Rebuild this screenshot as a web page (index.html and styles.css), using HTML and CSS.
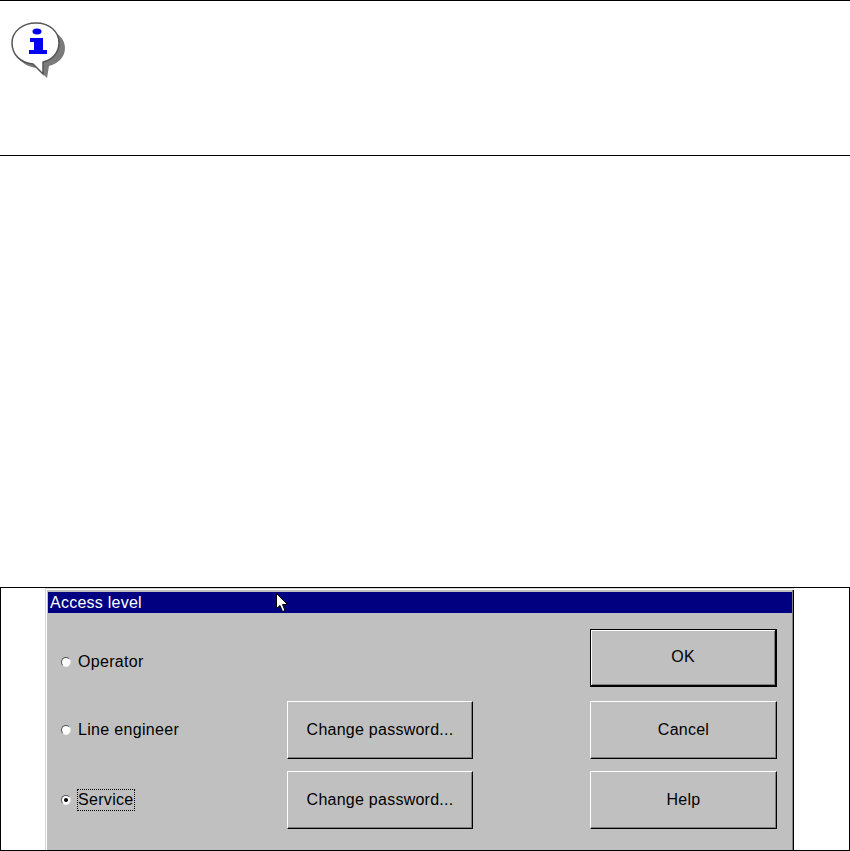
FILE: index.html
```html
<!DOCTYPE html>
<html lang="en">
<head>
<meta charset="utf-8">
<title>Access level</title>
<link rel="stylesheet" href="styles.css">
</head>
<body>
<section class="note">
  <svg class="note-icon" width="66" height="66" viewBox="0 0 66 66" xmlns="http://www.w3.org/2000/svg">
    <defs><filter id="soft" x="-10%" y="-10%" width="120%" height="120%"><feGaussianBlur stdDeviation="0.5"/></filter></defs>
    <g filter="url(#soft)">
      <path d="M29 8C43 8 55 15 55 27C55 37 47 43 39 45L37 57L27 47C15 46 6 38 6 27C6 15 16 8 29 8Z" fill="#7a7a7a" transform="translate(3 3)"/>
      <path d="M29 5C42 5 52 13 52 25C52 35 45 42 36 44L36 56L26 46C14 45 5 37 5 25C5 13 16 5 29 5Z" fill="#fff" stroke="#555" stroke-width="1.5"/>
      <ellipse cx="30" cy="13.500" rx="4.500" ry="3" fill="#0000f0"/>
      <path d="M23 20H36V32H40V36H22V32H27V24H23Z" fill="#0000f0"/>
    </g>
  </svg>
</section>
<section class="figure">
  <div class="dialog">
    <h1 class="titlebar">Access level</h1>
    <div class="dialog-body">
      <label class="choice choice-first"><span class="radio"></span><span class="choice-text">Operator</span></label>
      <span class="empty"></span>
      <span class="empty"></span>
      <button class="btn btn-default" type="button">OK</button>
      <label class="choice"><span class="radio"></span><span class="choice-text">Line engineer</span></label>
      <button class="btn" type="button">Change password...</button>
      <span class="empty"></span>
      <button class="btn" type="button">Cancel</button>
      <label class="choice"><span class="radio radio-on"></span><span class="choice-text choice-focus">Service</span></label>
      <button class="btn" type="button">Change password...</button>
      <span class="empty"></span>
      <button class="btn" type="button">Help</button>
    </div>
    <svg class="pointer" width="12" height="19" viewBox="0 0 12 19" xmlns="http://www.w3.org/2000/svg">
      <path d="M0.500 0.500V15.500L4 12.500L6.500 18.500L9 17.500L6.500 11.500H11.500Z" fill="#fff" stroke="#000" stroke-width="1"/>
    </svg>
  </div>
</section>
</body>
</html>
```
FILE: styles.css
```css
* { box-sizing: border-box; }
html, body { margin: 0; padding: 0; background: #fff; }
body {
  height: 851px;
  overflow: hidden;
  font-family: "Liberation Sans", Arial, sans-serif;
  color: #000;
}
.note {
  height: 156px;
  border-top: 1px solid #000;
  border-bottom: 1px solid #000;
  padding: 17px 0 0 7px;
}
.note-icon { display: block; }
.figure {
  margin-top: 431px;
  height: 264px;
  border: 1px solid #000;
  padding: 0 55px 0 44px;
  overflow: hidden;
}
.dialog {
  position: relative;
  width: 749px;
  height: 300px;
  background: #c0c0c0;
  padding: 3px 2px 0 2px;
  border-left: 1px solid #d4d4d4;
  border-top: 1px solid #d4d4d4;
  box-shadow: inset 1px 1px 0 #fff, inset -1px 0 0 #000, inset -2px 0 0 #808080;
}
.titlebar {
  margin: 0;
  height: 21px;
  padding-left: 2px;
  background: #000080;
  color: #fff;
  font-size: 16px;
  font-weight: normal;
  line-height: 22px;
  letter-spacing: 0.25px;
}
.dialog-body {
  display: grid;
  grid-template-columns: 239px 186px 117px 187px;
  grid-template-rows: 72px 70px 58px;
  padding-top: 16px;
}
.choice {
  display: flex;
  align-items: center;
  gap: 7px;
  height: 58px;
  padding-left: 13px;
  font-size: 16px;
  letter-spacing: 0.32px;
}
.choice-first { padding-top: 7px; }
.radio {
  position: relative;
  flex: none;
  width: 10px;
  height: 10px;
  border-radius: 50%;
  background: #fff;
  border: 1px solid;
  border-color: #555 #ddd #eee #555;
}
.radio-on::after {
  content: "";
  position: absolute;
  left: 2px;
  top: 2px;
  width: 4px;
  height: 4px;
  border-radius: 50%;
  background: #000;
}
.choice-focus {
  line-height: 20px;
  outline: 1px dotted #000;
}
.btn {
  display: block;
  height: 58px;
  padding: 0 0 1px;
  margin: 0;
  background: #c0c0c0;
  border: 1px solid;
  border-color: #fff #000 #000 #fff;
  border-radius: 0;
  box-shadow: inset -1px -1px 0 #808080;
  color: #000;
  font-family: inherit;
  font-size: 16px;
  letter-spacing: 0.25px;
  text-align: center;
}
.btn-default {
  border-color: #000;
  border-width: 1px 2px 2px 1px;
  box-shadow: inset 1px 1px 0 #fff, inset -1px -1px 0 #808080;
  padding-bottom: 1px;
}
.pointer {
  position: absolute;
  left: 230px;
  top: 4px;
}
```
